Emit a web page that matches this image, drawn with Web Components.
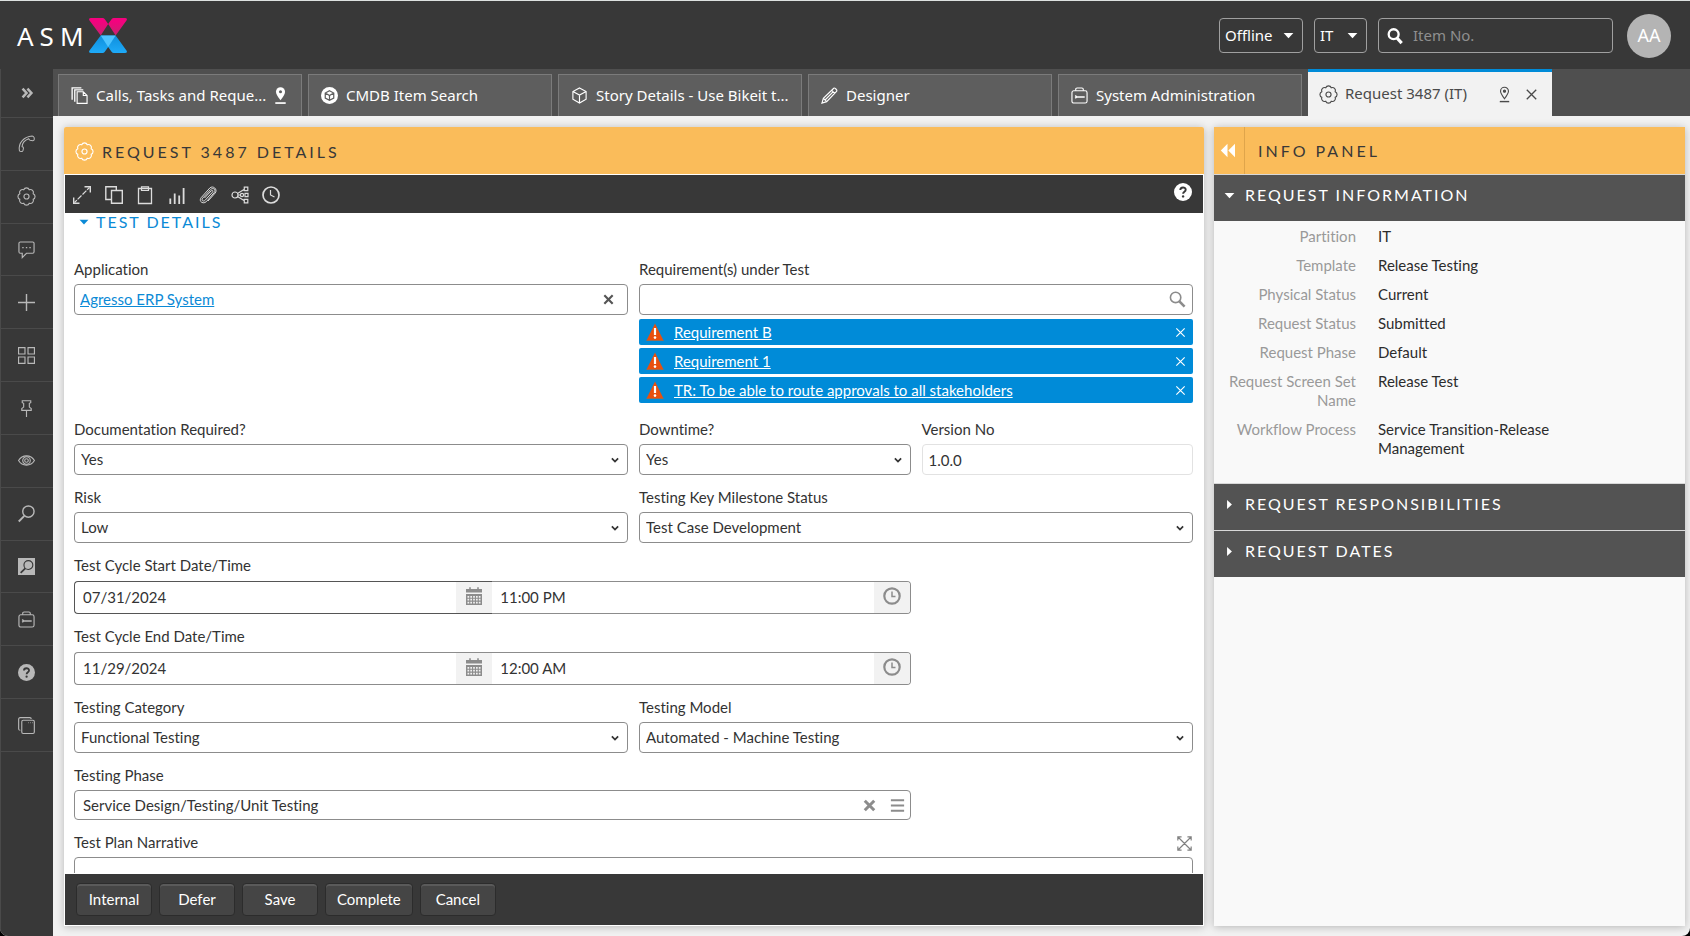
<!DOCTYPE html>
<html lang="en">
<head>
<meta charset="utf-8">
<title>Request 3487 (IT)</title>
<style>
  html, body { margin: 0; height: 100%; background: #000; }
  body { font: 15px/20px Lato, sans-serif; font-variant-ligatures: none; color: #333; }
</style>
</head>
<body>
<asm-app>
  <asm-header slot="header"></asm-header>
  <asm-sidebar slot="sidebar"></asm-sidebar>
  <asm-tabs slot="tabs">
    <asm-tab icon="docs" pin="solid">Calls, Tasks and Reque...</asm-tab>
    <asm-tab icon="cubeDisc">CMDB Item Search</asm-tab>
    <asm-tab icon="cube">Story Details - Use Bikeit t...</asm-tab>
    <asm-tab icon="pencil">Designer</asm-tab>
    <asm-tab icon="toolbox">System Administration</asm-tab>
    <asm-tab icon="gear" pin="outline" active>Request 3487 (IT)</asm-tab>
  </asm-tabs>
  <asm-request-panel>
    <asm-toolbar slot="toolbar"></asm-toolbar>
    <asm-lookup class="half" label="Application" value="Agresso ERP System"></asm-lookup>
    <asm-requirements class="half" label="Requirement(s) under Test">
      <asm-chip>Requirement B</asm-chip>
      <asm-chip>Requirement 1</asm-chip>
      <asm-chip>TR: To be able to route approvals to all stakeholders</asm-chip>
    </asm-requirements>
    <asm-select class="half" label="Documentation Required?" value="Yes"></asm-select>
    <asm-select label="Downtime?" value="Yes"></asm-select>
    <asm-text label="Version No" value="1.0.0"></asm-text>
    <asm-select class="half" label="Risk" value="Low"></asm-select>
    <asm-select class="half" label="Testing Key Milestone Status" value="Test Case Development"></asm-select>
    <asm-datetime class="wide" label="Test Cycle Start Date/Time" date="07/31/2024" time="11:00 PM" current></asm-datetime>
    <asm-datetime class="wide" label="Test Cycle End Date/Time" date="11/29/2024" time="12:00 AM"></asm-datetime>
    <asm-select class="half" label="Testing Category" value="Functional Testing"></asm-select>
    <asm-select class="half" label="Testing Model" value="Automated - Machine Testing"></asm-select>
    <asm-tree-picker class="wide" label="Testing Phase" value="Service Design/Testing/Unit Testing"></asm-tree-picker>
    <asm-memo class="full" label="Test Plan Narrative"></asm-memo>
    <asm-actions slot="actions"></asm-actions>
  </asm-request-panel>
  <asm-info-panel>
    <asm-section heading="REQUEST INFORMATION" expanded>
      <asm-facts></asm-facts>
    </asm-section>
    <asm-section heading="REQUEST RESPONSIBILITIES"></asm-section>
    <asm-section heading="REQUEST DATES"></asm-section>
  </asm-info-panel>
</asm-app>

<script>
/* Scalloped outline of eight lobes round a centre of 9,9 */
function scallop(radius, lobe) {
  let d = '';
  for (let i = 0; i <= 8; i++) {
    const a = Math.PI / 8 + i * Math.PI / 4;
    const x = (9 + radius * Math.cos(a)).toFixed(2), y = (9 + radius * Math.sin(a)).toFixed(2);
    d += i ? `A${lobe} ${lobe} 0 0 1 ${x} ${y}` : `M${x} ${y}`;
  }
  return d + 'Z';
}
const cubeLines = 'M9 1 16 4.800V13L9 17 2 13V4.800ZM2 4.800 9 8.500 16 4.800M9 8.500V17';
const ICONS = {
  expandSide: '<path d="M3 4l4.500 5L3 14M8.500 4 13 9l-4.500 5" stroke-width="2.800" transform="translate(1 0)"/>',
  phone: '<path d="M1.500 16.500c-1.500-8 5-15 13.500-15.500 1 0 1.500.5 2 1.500l.3 1.800c0 1-.6 1.700-1.500 1.700l-3-.5c-.8-.2-1.300-1-1.500-1.600C7 5.500 4.500 8.500 4.300 12.300c1 .2 1.500.7 1.500 1.500l-.5 2.500c-.2.800-.8 1.200-1.600 1.200-1 0-2-.2-2.200-1z" stroke-width="1.100"/>',
  gear: `<path d="${scallop(7.700, 3.200)}"/><circle cx="9" cy="9" r="2.700"/>`,
  chat: '<path d="M2.500 1h13c1 0 1.500.5 1.500 1.500v9c0 1-.5 1.500-1.500 1.500H9l-4.500 4.500V13h-2C1.500 13 1 12.500 1 11.500v-9C1 1.500 1.500 1 2.500 1z"/><path d="M4.500 7h1.500M8.300 7h1.500M12 7h1.500" stroke-width="1.500"/>',
  plus: '<path d="M9 0v18M0 9h18" stroke-width="1.500"/>',
  grid: '<path d="M.6.6h6.800v6.800H.6zM10.600.6h6.800v6.800h-6.800zM.6 10.600h6.800v6.800H.6zM10.600 10.600h6.800v6.800h-6.800z"/>',
  pushpin: '<path d="M4.500.8h9v2l-1.500.7v4l2 1.500v2H4v-2L6 7.500v-4l-1.500-.7zM9 11v7"/>',
  eye: '<path d="M.6 9C4.500 2.500 13.500 2.500 17.400 9 13.500 15.500 4.500 15.500.6 9z"/><circle cx="9" cy="9" r="4"/><circle cx="9" cy="9" r="1.900"/>',
  searchLeft: '<circle cx="11" cy="7" r="6" stroke-width="1.500"/><path d="M6.700 11.500.8 17.500" stroke-width="2"/>',
  searchBox: '<path d="M0 0h18v18H0z" fill="currentColor" stroke="none"/><g stroke="#383838"><circle cx="11" cy="7.500" r="4.700" stroke-width="1.200"/><path d="M7.700 11 2.800 15.800" stroke-width="1.800"/></g>',
  toolbox: '<rect x="1" y="4" width="16" height="13" rx="2"/><path d="M5 4V2.500C5 1.600 5.500 1 6.500 1h5c1 0 1.500.6 1.500 1.500V4"/><path d="M4.500 9l1.500 1.500-1.500 1.500M6 10.500h8.500" stroke-width="1.600"/>',
  help: '<circle cx="9" cy="9" r="9" fill="currentColor" stroke="none"/><path d="M6.300 7c0-3.300 5.400-3.300 5.400-.2 0 2-2.600 2-2.600 4" stroke="#383838" stroke-width="1.900"/><circle cx="9.100" cy="13.400" r="1.200" fill="#383838" stroke="none"/>',
  stack: '<rect x="4" y="3.500" width="13.300" height="14" rx="1.500"/><path d="M2.500 14C1.300 14 .7 13.500.7 12.500v-10C.7 1.500 1.200.7 2.500.7h10c1 0 1.500.5 1.500 1.500M11 6h.5M13 6h.5M15 6h.5" />',
  docs: '<path d="M6.500 5h6.500l4 4v8.400H6.500zM13 5v4h4"/><path d="M4 15.500V3h9M1.200 13.500V1H11" stroke-width="1.400"/>',
  cubeDisc: '<circle cx="9" cy="9" r="9" fill="currentColor" stroke="none"/><path d="M9 4l4.500 2.400v5.400L9 14.200l-4.500-2.400V6.400zM4.500 6.400 9 9l4.500-2.600M9 9v5" stroke="#5e5e5e" stroke-width="1.300"/>',
  cube: `<path d="${cubeLines}"/>`,
  pencil: '<path d="M1 17l1.500-5L13.500 1.300c1-.8 4 2 3.200 3.200L6 15.500zM2.500 12l3.500 3.500M11.300 3.500l3.200 3.200M4.500 13.500 13 5"/>',
  pinSolid: '<path d="M9 14C6 10 4.200 7.500 4.200 5a4.800 4.800 0 0 1 9.600 0c0 2.500-1.800 5-4.800 9z" fill="currentColor" stroke="none"/><circle cx="9" cy="5" r="1.600" fill="#5e5e5e" stroke="none"/><path d="M3.500 17h11" stroke-width="1.800"/>',
  pinOutline: '<path d="M9 13.500C6.500 10 4.800 7.500 4.800 5.500a4.200 4.200 0 0 1 8.400 0c0 2-1.700 4.500-4.200 8z"/><circle cx="9" cy="5.500" r="1.100" fill="currentColor"/><path d="M4 16.500h10" stroke-width="1.500"/>',
  cross: '<path d="M4 4l10 10M14 4 4 14" stroke-width="1.400"/>',
  crossBold: '<path d="M4 4l10 10M14 4 4 14" stroke-width="2.600"/>',
  crossHeavy: '<path d="M4 4l10 10M14 4 4 14" stroke-width="3.200"/>',
  maximize: '<path d="M9.500 8.500l7-7M8.500 9.500l-7 7" stroke-dasharray="5.500 1"/><path d="M11.500.7h5.800v5.800M.7 11.500v5.800h5.800" stroke-width="1.400"/>',
  copy: '<path d="M6.500 4.500h10.800v12.800H6.500z" stroke-width="1.400"/><path d="M6.500 13.500H.8V.8h10.500v3.700" stroke-width="1.400"/>',
  clipboard: '<path d="M2.500 2.500h13v15h-13z" stroke-width="1.300"/><path d="M5.500.8h7v3.700h-7z"/>',
  bars: '<path d="M2.300 18v-5.500M6.700 18V7.500M11.200 18v-8.500M15.600 18V2" stroke-width="1.800"/>',
  clip: '<path d="M5.500 12 12 5c1.300-1.300 2.600-.1 1.500 1.200l-7.300 8c-2 2-4.300 0-2.400-2.200l7.700-8.400c2.800-2.600 6 .3 3.700 3L7.500 15.500C4 18.800-.8 15.300 2.300 11.500L10.800 2c3.200-3 8.300 1.500 5.400 5L9 15" stroke-width="1"/>',
  share: '<circle cx="4" cy="9" r="3"/><circle cx="11" cy="9" r="1.600"/><path d="M7 9h2.500M6.500 7.500 13 3.500M6.500 10.500l6.500 4M13.300 1.200h3.500v3.500h-3.500zM13.300 13.300h3.500v3.500h-3.500zM14 7.300h3v3.400h-3z"/>',
  clock: '<circle cx="9" cy="9" r="8" stroke-width="1.700"/><path d="M8.500 4v5l4 2"/>',
  clockBold: '<circle cx="9" cy="9" r="7.700" stroke-width="2.200"/><path d="M9 4.500v5h3.500" stroke-width="1.500"/>',
  search: '<circle cx="7.500" cy="7" r="5.600" stroke-width="2.600"/><path d="M11.500 11.500l5 5.500" stroke-width="3.600"/>',
  searchThin: '<circle cx="7" cy="6.800" r="5.500" stroke-width="1.700"/><path d="M11 11l5.500 5.500" stroke-width="2.800"/>',
  calendar: '<path d="M1 2H17V5.500H1z M1 7h16V18H1z" fill="currentColor" stroke="none"/><path d="M5 .3v3M13 .3v3" stroke-width="1.600"/><path d="M2.500 9.800h13M2.500 12.700h13M2.500 15.600h13" stroke="#f2f2f2" stroke-width="1.700" stroke-dasharray="1.700 1.130"/>',
  menu: '<path d="M2 3.500h14M2 9h14M2 14.500h14" stroke-width="2.200"/>',
  warn: '<path d="M9 .5 17.500 17.500H.5z" fill="#e8500e" stroke="none"/><path d="M.5 17.500h17" stroke="#9a6a50" stroke-width="1"/><path d="M9 5v7" stroke="#fff" stroke-width="2.200"/><circle cx="9" cy="14.600" r="1.300" fill="#fff" stroke="none"/>',
  fullscreen: '<path d="M1.500 1.500l15 15M16.500 1.500l-15 15M1 5.500V1h4.500M12.500 1H17v4.500M17 12.500V17h-4.500M5.500 17H1v-4.500" stroke-width="1.400"/>',
  caretDown: '<path d="M1 5h16L9 13.500z" fill="currentColor" stroke="none"/>',
  caretRight: '<path d="M5 1.500v15L13 9z" fill="currentColor" stroke="none"/>',
  rewind: '<path d="M9 1v16L1 9zM18 1v16l-8-8z" fill="currentColor" stroke="none"/>',
  chevron: '<path d="M2 5.500l7 7 7-7" stroke-width="4"/>'
};

const RESET = `
  *, *::before, *::after { box-sizing: border-box; }
  button, input, select, textarea { font: inherit; font-variant-ligatures: inherit; color: inherit; margin: 0; padding: 0; border: 0; background: none; border-radius: 0; outline: 0; appearance: none; }
  button, a { cursor: pointer; }
  a { color: inherit; }
`;
const FIELD = `
  :host { display: block; min-width: 0; }
  label { display: block; margin-bottom: 5px; color: #333; }
  .box { display: flex; align-items: center; height: 31px; border: 1px solid #8c8c8c; border-radius: 4px; background: #fff; }
  .box > input { flex: 1; min-width: 0; height: 100%; }
  .box button { display: grid; place-items: center; color: #8c8c8c; }
`;
function define(name, css, markup) {
  customElements.define(name, class extends HTMLElement {
    constructor() {
      super();
      this.attachShadow({ mode: 'open' });
    }
    connectedCallback() {
      this.shadowRoot.innerHTML = `<style>${RESET}${css}</style>${typeof markup === 'function' ? markup(this) : markup}`;
    }
  });
}
const attr = (el, name) => el.getAttribute(name) || '';
const icon = (name, size = 18) => `<asm-icon name="${name}" size="${size}"></asm-icon>`;

define('asm-icon', `
  :host { display: block; flex: none; }
  svg { display: block; overflow: visible; }
`, el => `<svg width="${attr(el, 'size')}" height="${attr(el, 'size')}" viewBox="0 0 18 18" fill="none" stroke="currentColor" stroke-width="1.200" aria-hidden="true">${ICONS[attr(el, 'name')]}</svg>`);

define('asm-app', `
  :host { display: grid; grid-template: 69px 47px minmax(0, 1fr) / 53px minmax(0, 1fr); height: 100vh; background: #f2f2f2; border-radius: 0 0 8px 8px; overflow: hidden; }
  slot[name=header] { display: block; grid-column: 1 / 3; }
  slot[name=sidebar] { display: block; grid-row: 2 / 4; }
  main { display: grid; grid-template-columns: minmax(0, 1fr) 471px; gap: 10px; padding: 11px 5px 10px 11px; min-height: 0; }
`, `<slot name="header"></slot><slot name="sidebar"></slot><slot name="tabs"></slot><main><slot></slot></main>`);

define('asm-header', `
  :host { display: block; height: 100%; background: #383838; border-top: 1px solid #dde1e0; color: #fff; font: 15px/20px "Noto Sans", sans-serif; }
  header { display: flex; align-items: center; gap: 11px; height: 100%; padding: 0 19px 0 17px; }
  .brand { display: flex; align-items: center; margin-right: auto; color: #fff; text-decoration: none; }
  .brand span { font: 26px/36px "Noto Sans", sans-serif; letter-spacing: 6px; }
  .drop { display: grid; align-items: center; height: 35px; border: 1px solid #a0a0a0; border-radius: 4px; }
  .drop > * { grid-area: 1 / 1; }
  .drop select { height: 100%; padding: 0 0 2px 5px; }
  .drop asm-icon { justify-self: end; margin-right: 8px; pointer-events: none; }
  .status { width: 84px; } .partition { width: 53px; }
  .find { display: flex; align-items: center; gap: 10px; width: 235px; height: 35px; padding-left: 8px; border: 1px solid #a0a0a0; border-radius: 4px; }
  .find input { flex: 1; min-width: 0; height: 100%; padding-bottom: 2px; }
  input::placeholder { color: #8f8f8f; opacity: 1; }
  .avatar { width: 44px; height: 44px; margin-left: 3px; padding-bottom: 2px; border-radius: 50%; background: #b4b4b4; font-size: 18px; }
`, `<header>
  <a class="brand" href="#" aria-label="ASM X home"><span>ASM</span>
    <svg width="38" height="35" viewBox="0 0 107 104" preserveAspectRatio="none" aria-hidden="true">
      <defs>
        <linearGradient id="p" x1="0" y1="0" x2="0" y2="1"><stop offset=".2" stop-color="#f4027e"/><stop offset="1" stop-color="#c5246f"/></linearGradient>
        <linearGradient id="b" x1="0" y1="0" x2="0" y2="1"><stop offset="0" stop-color="#0f8fdc"/><stop offset="1" stop-color="#1eaaf8"/></linearGradient>
      </defs>
      <path d="M6 0H38Q42 0 44 3L54 18 33 52 1 7Q-2 0 6 0zM101 0H70Q66 0 64 3L54 18 75 52 106 7Q109 0 101 0z" fill="url(#p)"/>
      <path d="M33 52H75L106 97Q109 104 101 104H70Q66 104 64 101L54 86 44 101Q42 104 38 104H6Q-2 104 1 97z" fill="url(#b)"/>
      <path d="M33 52H75L54 86z" fill="#4fc4ff"/>
    </svg></a>
  <div class="drop status"><select aria-label="Status"><option>Offline</option></select>${icon('caretDown', 11)}</div>
  <div class="drop partition"><select aria-label="Partition"><option>IT</option></select>${icon('caretDown', 11)}</div>
  <div class="find">${icon('search', 16)}<input type="search" placeholder="Item No." aria-label="Item number"></div>
  <button class="avatar" aria-label="Account AA">AA</button>
</header>`);

const NAV = [['phone', 'Calls'], ['gear', 'Requests'], ['chat', 'Messages'], ['plus', 'New'], ['grid', 'Dashboards'], ['pushpin', 'Pinned'], ['eye', 'Watched'], ['searchLeft', 'Search'], ['searchBox', 'Advanced search'], ['toolbox', 'Administration'], ['help', 'Help'], ['stack', 'Windows']];
define('asm-sidebar', `
  :host { display: block; height: 100%; background: #383838; border-left: 1px solid #4a4a4a; color: #b8b8b8; }
  button { display: grid; place-items: center; width: 100%; padding-right: 1px; }
  .expand { height: 49px; border-bottom: 1px solid #4a4a4a; }
  nav { display: flex; flex-direction: column; height: 634px; }
  nav button { flex: 1; border-bottom: 1px solid #4a4a4a; }
`, `<button class="expand" aria-label="Expand menu">${icon('expandSide', 16)}</button>
<nav>${NAV.map(([name, label]) => `<button aria-label="${label}">${icon(name, 17)}</button>`).join('')}</nav>`);

define('asm-tabs', `
  :host { display: flex; align-items: flex-end; gap: 6px; padding: 0 5px; background: #4f4f4f; min-width: 0; }
`, `<slot></slot>`);

define('asm-tab', `
  :host { display: flex; align-items: center; flex: 0 1 244px; min-width: 0; height: 42px; padding: 0 12px; background: #5e5e5e; border: 1px solid #7b7b7b; border-bottom: 0; color: #fff; font: 15px/20px "Noto Sans", sans-serif; box-sizing: border-box; }
  :host([active]) { height: 47px; background: #f2f2f2; border: 0; border-top: 3px solid #008bd8; color: #4a4a4a; }
  button { display: flex; align-items: center; min-width: 0; height: 100%; }
  .title { gap: 8px; margin-right: auto; white-space: nowrap; }
  .text { padding-bottom: 2px; }
  .pin, .close { flex: none; }
  .close { margin-left: 10px; }
`, el => `<button class="title">${icon(attr(el, 'icon'), 17)}<span class="text"><slot></slot></span></button>
${attr(el, 'pin') ? `<button class="pin" aria-label="Pin tab">${icon(attr(el, 'pin') === 'solid' ? 'pinSolid' : 'pinOutline', 17)}</button>` : ''}
${el.hasAttribute('active') ? `<button class="close" aria-label="Close tab">${icon('cross', 17)}</button>` : ''}`);

define('asm-request-panel', `
  :host { display: flex; flex-direction: column; min-width: 0; min-height: 0; background: #fff; box-shadow: 0 1px 8px rgba(0, 0, 0, .25); border-radius: 2px 2px 0 0; }
  header { display: flex; align-items: center; gap: 9px; flex: none; height: 47px; padding: 2px 0 0 12px; background: #fabc5a; border-radius: 2px 2px 0 0; color: #fff; }
  h1 { margin: 0; font: 16px/20px Lato, sans-serif; letter-spacing: 3px; color: #383838; }
  .body { display: flex; flex-direction: column; flex: 1; min-height: 0; padding: 1px; }
  .scroll { flex: 1; min-height: 0; overflow: hidden auto; scrollbar-width: none; padding: 0 10px 0 9px; margin-bottom: 1px; }
  h2 { margin: 0 0 28px; font: 16px/18px Lato, sans-serif; color: #0b8ad6; }
  h2 button { display: flex; align-items: center; gap: 7px; padding-left: 5px; letter-spacing: 2px; }
  .fields { display: grid; grid-template-columns: repeat(4, minmax(0, 1fr)); gap: 12px 11px; }
  ::slotted(.half) { grid-column: span 2; }
  ::slotted(.wide) { grid-column: 1 / span 3; }
  ::slotted(.full) { grid-column: 1 / -1; }
`, `<header>${icon('gear', 17)}<h1>REQUEST 3487 DETAILS</h1></header>
<div class="body"><slot name="toolbar"></slot>
<div class="scroll"><h2><button aria-expanded="true">${icon('caretDown', 10)}TEST DETAILS</button></h2>
<form class="fields"><slot></slot></form></div>
<slot name="actions"></slot></div>`);

const TOOLS = [['maximize', 'Maximize'], ['copy', 'Copy'], ['clipboard', 'Clipboard'], ['bars', 'Statistics'], ['clip', 'Attachments'], ['share', 'Links'], ['clock', 'History']];
define('asm-toolbar', `
  :host { display: flex; justify-content: space-between; flex: none; height: 38px; padding: 0 11px 0 8px; background: #383838; color: #dcdcdc; }
  .tools { display: flex; align-items: center; justify-content: space-between; width: 207px; margin-top: 2px; }
  .help { display: grid; place-items: center; height: 34px; color: #fff; }
`, `<div class="tools">${TOOLS.map(([name, label]) => `<button aria-label="${label}">${icon(name)}</button>`).join('')}</div>
<button class="help" aria-label="Help">${icon('help')}</button>`);

define('asm-lookup', `${FIELD}
  .box { padding: 0 11px 0 5px; }
  a { margin-right: auto; padding-bottom: 1px; color: #0b8ad6; }
  .box button { color: #555; }
`, el => `<label id="l">${attr(el, 'label')}</label>
<div class="box" role="group" aria-labelledby="l"><a href="#">${attr(el, 'value')}</a><button type="button" aria-label="Clear">${icon('crossBold', 15)}</button></div>`);

define('asm-requirements', `${FIELD}
  :host { padding-bottom: 4px; }
  .box { padding: 0 6px; }
  .chips { display: grid; gap: 3px; margin-top: 4px; }
`, el => `<label for="f">${attr(el, 'label')}</label>
<div class="box"><input id="f" type="text"><button type="button" aria-label="Search">${icon('searchThin', 17)}</button></div>
<div class="chips"><slot></slot></div>`);

define('asm-chip', `
  :host { display: flex; align-items: center; height: 26px; padding: 0 5px 0 7px; background: #008bd8; border-radius: 2px; color: #fff; }
  a { margin: 0 auto 0 10px; }
`, `${icon('warn')}<a href="#"><slot></slot></a><button type="button" aria-label="Remove">${icon('cross', 15)}</button>`);

define('asm-select', `${FIELD}
  .box { display: grid; }
  .box > * { grid-area: 1 / 1; }
  select { height: 100%; padding: 0 24px 2px 6px; }
  asm-icon { justify-self: end; margin-right: 8px; pointer-events: none; }
`, el => `<label for="f">${attr(el, 'label')}</label>
<div class="box"><select id="f"><option>${attr(el, 'value')}</option></select>${icon('chevron', 8)}</div>`);

define('asm-text', `${FIELD}
  .box { border-color: #e2e2e2; padding: 0 6px; }
`, el => `<label for="f">${attr(el, 'label')}</label>
<div class="box"><input id="f" type="text" value="${attr(el, 'value')}"></div>`);

define('asm-datetime', `${FIELD}
  label { margin-bottom: 6px; }
  .pair { display: grid; grid-template-columns: 1fr 1fr; }
  .box { height: 33px; padding-left: 8px; overflow: hidden; }
  .box > input { padding-bottom: 2px; }
  .date { border-right: 0; border-radius: 4px 0 0 4px; }
  .time { border-left: 0; border-radius: 0 4px 4px 0; }
  :host([current]) .date { border-color: #555; }
  .box button { width: 36px; height: 100%; padding-bottom: 3px; background: #f2f2f2; }
`, el => `<label for="d">${attr(el, 'label')}</label>
<div class="pair">
  <div class="box date"><input id="d" type="text" value="${attr(el, 'date')}"><button type="button" aria-label="Choose date">${icon('calendar')}</button></div>
  <div class="box time"><input type="text" aria-label="${attr(el, 'label')}, time" value="${attr(el, 'time')}"><button type="button" aria-label="Choose time">${icon('clockBold')}</button></div>
</div>`);

define('asm-tree-picker', `${FIELD}
  .box { height: 30px; padding: 0 4px 0 8px; gap: 11px; }
`, el => `<label for="f">${attr(el, 'label')}</label>
<div class="box"><input id="f" type="text" value="${attr(el, 'value')}"><button type="button" aria-label="Clear">${icon('crossHeavy', 17)}</button><button type="button" aria-label="Browse">${icon('menu', 17)}</button></div>`);

define('asm-memo', `${FIELD}
  .top { display: flex; justify-content: space-between; padding-right: 1px; }
  .top button { color: #808080; height: 22px; }
  textarea { display: block; width: 100%; height: 90px; border: 1px solid #8c8c8c; border-radius: 4px; resize: none; }
`, el => `<div class="top"><label for="f">${attr(el, 'label')}</label><button type="button" aria-label="Open full size">${icon('fullscreen', 15)}</button></div>
<textarea id="f"></textarea>`);

define('asm-actions', `
  :host { display: flex; align-items: center; gap: 7px; flex: none; height: 51px; padding: 0 11px; background: #383838; color: #fff; }
  button { min-width: 76px; height: 33px; padding: 0 11px 2px; background: #454545; border: 1px solid #2c2c2c; border-radius: 4px; box-shadow: inset 0 2px 0 #5a5a5a; }
`, ['Internal', 'Defer', 'Save', 'Complete', 'Cancel'].map(t => `<button type="button">${t}</button>`).join(''));

define('asm-info-panel', `
  :host { display: block; min-width: 0; background: #f9f9f9; box-shadow: 0 1px 8px rgba(0, 0, 0, .25); }
  header { display: flex; height: 47px; background: #fabc5a; }
  header button { display: grid; place-items: center; width: 31px; padding-right: 4px; border-right: 1px solid #dfa54b; color: #fff; }
  h1 { margin: 0; padding: 14px 13px; font: 16px/20px Lato, sans-serif; letter-spacing: 3px; color: #383838; }
`, `<header><button aria-label="Collapse panel">${icon('rewind', 15)}</button><h1>INFO PANEL</h1></header><slot></slot>`);

define('asm-section', `
  :host { display: block; border-top: 1px solid #d8d8d8; }
  h2 { margin: 0; font: 16px/20px Lato, sans-serif; }
  button { display: flex; align-items: center; gap: 10px; width: 100%; height: 46px; padding: 0 10px 6px; background: #535353; color: #fff; letter-spacing: 2px; text-align: left; }
`, el => {
  const open = el.hasAttribute('expanded');
  return `<h2><button aria-expanded="${open}">${icon(open ? 'caretDown' : 'caretRight', 11)}${attr(el, 'heading')}</button></h2><slot></slot>`;
});

const FACTS = [['Partition', 'IT'], ['Template', 'Release Testing'], ['Physical Status', 'Current'], ['Request Status', 'Submitted'], ['Request Phase', 'Default'], ['Request Screen Set Name', 'Release Test'], ['Workflow Process', 'Service Transition-Release Management']];
define('asm-facts', `
  :host { display: block; padding: 6px 0 25px; line-height: 19px; }
  dl { display: grid; grid-template-columns: 142px minmax(0, 200px); gap: 10px 22px; margin: 0; }
  dt { color: #999; text-align: right; }
  dd { margin: 0; color: #2c2c2c; }
`, `<dl>${FACTS.map(([k, v]) => `<dt>${k}</dt><dd>${v}</dd>`).join('')}</dl>`);
</script>
</body>
</html>
